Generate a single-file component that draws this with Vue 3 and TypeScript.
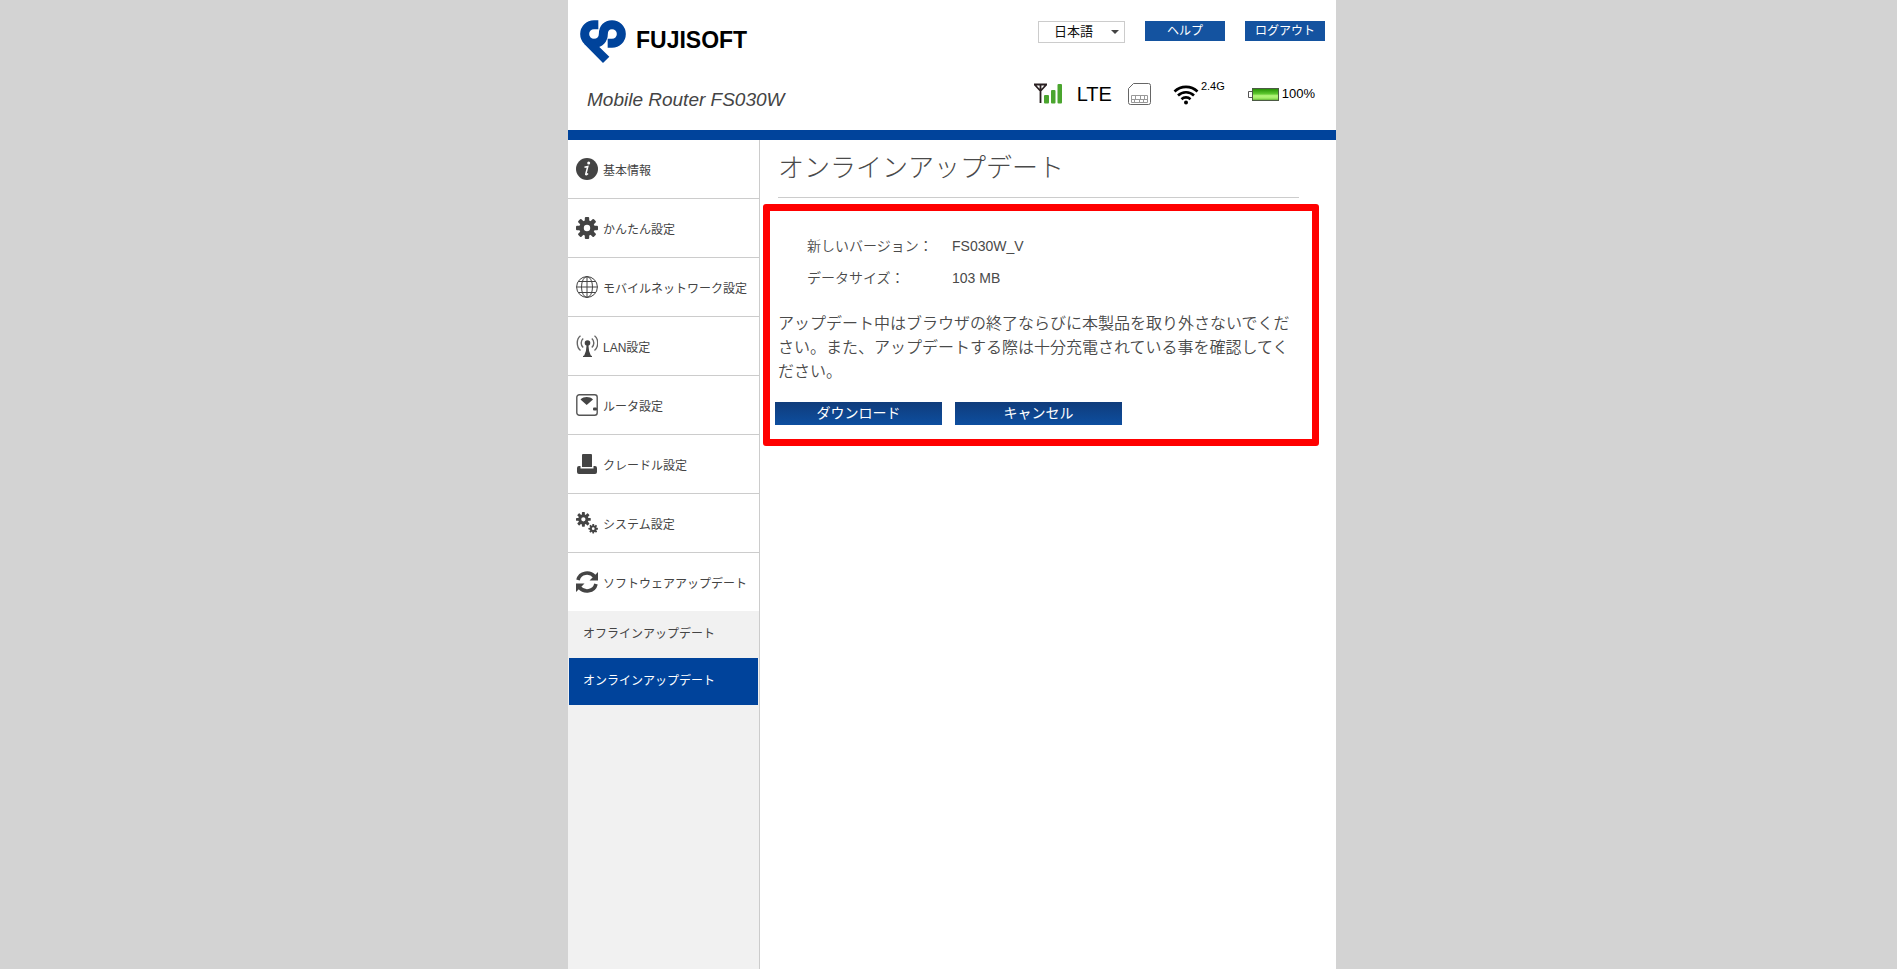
<script setup lang="ts">
import { ref } from 'vue'

interface MenuItem {
  label: string
  icon: string
}

const menu: MenuItem[] = [
  { label: '基本情報', icon: 'info' },
  { label: 'かんたん設定', icon: 'gear' },
  { label: 'モバイルネットワーク設定', icon: 'globe' },
  { label: 'LAN設定', icon: 'antenna' },
  { label: 'ルータ設定', icon: 'router' },
  { label: 'クレードル設定', icon: 'cradle' },
  { label: 'システム設定', icon: 'gears' },
  { label: 'ソフトウェアアップデート', icon: 'refresh' },
]

const submenu = ['オフラインアップデート', 'オンラインアップデート']
const current = ref('オンラインアップデート')
const language = ref('ja')

const teeth = [0, 45, 90, 135, 180, 225, 270, 315]
</script>

<template>
  <div class="page">
    <div class="shell">
      <header class="header">
        <div class="brand">
          <a class="logo" href="#">
            <svg class="logo-mark" viewBox="0 0 138 129" aria-hidden="true">
              <path
                d="M55 14H42a28 28 0 0 0 0 56C60 69 70 58 70 42C70 24 80 14 96 14a28 28 0 0 1 0 56H83"
                fill="none"
                stroke="#00439b"
                stroke-width="27"
              />
              <path d="M12 71L69 129L88 110L58 81L40 60z" fill="#00439b" />
            </svg>
            <span class="logo-text">FUJISOFT</span>
          </a>
          <p class="model">Mobile Router FS030W</p>
        </div>
        <div class="tools">
          <div class="controls">
            <div class="lang">
              <select v-model="language" aria-label="言語">
                <option value="ja">日本語</option>
                <option value="en">English</option>
              </select>
            </div>
            <button type="button" class="small-btn">ヘルプ</button>
            <button type="button" class="small-btn">ログアウト</button>
          </div>
          <div class="status">
            <svg class="signal" viewBox="0 0 30 22" aria-hidden="true">
              <path d="M1 1.500h13M7.500 1v19M2 2l5.500 6L13 2" fill="none" stroke="#2a2022" stroke-width="1.800" />
              <rect x="11" y="12" width="5" height="8.500" rx="1" fill="#4aa52e" />
              <rect x="18" y="7" width="4.500" height="13.500" rx="1" fill="#4aa52e" />
              <rect x="24.500" y="1" width="4.500" height="19.500" rx="1" fill="#4aa52e" />
            </svg>
            <span class="lte">LTE</span>
            <svg class="sim" viewBox="0 0 24 24" aria-hidden="true">
              <path d="M5.500 1.500H20.500a2 2 0 0 1 2 2v17a2 2 0 0 1-2 2H2.500a2 2 0 0 1-2-2V6.500z" fill="#fff" stroke="#666" />
              <path d="M3.500 13.500h16v7h-16zM3.500 17.500h16M7.500 13.500v4M12.500 13.500v4M16.500 13.500v4M6.500 17.500v3M11.500 17.500v3M15.500 17.500v3" fill="none" stroke="#999" />
            </svg>
            <span class="wifi">
              <svg viewBox="0 0 26 21" aria-hidden="true">
                <path d="M1.500 7.500a16.500 16.500 0 0 1 23 0M5 11.500a11.500 11.500 0 0 1 16 0M8.500 15.200a6.500 6.500 0 0 1 9 0" fill="none" stroke="#000" stroke-width="2.600" />
                <circle cx="13" cy="18.500" r="2" fill="#000" />
              </svg>
              <sup>2.4G</sup>
            </span>
            <span class="battery">
              <svg viewBox="0 0 31 14" aria-hidden="true">
                <defs>
                  <linearGradient id="charge" x1="0" y1="0" x2="0" y2="1">
                    <stop offset="0" stop-color="#1f8a00" />
                    <stop offset="0.450" stop-color="#5fc930" />
                    <stop offset="0.600" stop-color="#b4f57c" />
                    <stop offset="0.800" stop-color="#a2ee68" />
                    <stop offset="1" stop-color="#53a82c" />
                  </linearGradient>
                </defs>
                <path d="M4.500 4.500h-4v6h4" fill="#fff" stroke="#555" />
                <rect x="4.500" y="1.500" width="26" height="12" fill="url(#charge)" stroke="#4b5a44" />
              </svg>
              100%
            </span>
          </div>
        </div>
      </header>

      <div class="body">
        <nav class="sidebar">
          <ul>
            <li v-for="item in menu" :key="item.icon" class="menu-item">
              <a href="#">
                <svg viewBox="0 0 22 22" aria-hidden="true">
                  <g v-if="item.icon === 'info'">
                    <circle cx="11" cy="11" r="11" fill="#444" />
                    <circle cx="12.700" cy="5" r="1.500" fill="#fff" />
                    <path d="M8.500 9.200l3.300-.7-2 7.500c-.3 1.200.8 1 2.200-.5" fill="none" stroke="#fff" stroke-width="1.500" />
                  </g>
                  <g v-else-if="item.icon === 'gear'" fill="#444">
                    <rect v-for="t in teeth" :key="t" x="8.800" y="0" width="4.400" height="6" rx="1" :transform="`rotate(${t} 11 11)`" />
                    <circle cx="11" cy="11" r="5.500" fill="none" stroke="#444" stroke-width="4.600" />
                  </g>
                  <g v-else-if="item.icon === 'globe'" fill="none" stroke="#444">
                    <circle cx="11" cy="11" r="10.400" />
                    <ellipse cx="11" cy="11" rx="5.500" ry="10.400" />
                    <path d="M11 .6v20.800M.6 11h20.800M2.500 5.500h17M2.500 16.500h17" />
                  </g>
                  <g v-else-if="item.icon === 'antenna'">
                    <circle cx="11.500" cy="8" r="2.800" fill="#444" />
                    <path d="M10.700 9h1.600l.8 7 1.700 4.500 1.200.5v1H7v-1l1.200-.5L9.900 16z" fill="#444" />
                    <path d="M7.200 3.500a6 6 0 0 0 0 9M15.800 3.500a6 6 0 0 1 0 9M4.500.8C.2 4 .2 12 4.500 15.500M18.500.8C22.800 4 22.800 12 18.500 15.500" fill="none" stroke="#666" stroke-width="1.400" />
                  </g>
                  <g v-else-if="item.icon === 'router'">
                    <rect x=".8" y=".8" width="20.400" height="20.400" rx="2.500" fill="none" stroke="#555" stroke-width="1.400" />
                    <path d="M4.500 5.500C8 2.300 13.500 2.300 17 5.500L10.700 11z" fill="#444" />
                    <rect x="17" y="13.500" width="4" height="3" rx="1" fill="#444" />
                  </g>
                  <g v-else-if="item.icon === 'cradle'" fill="#444">
                    <path d="M6 2a1 1 0 0 1 1-1h8a1 1 0 0 1 1 1v12H6z" />
                    <path d="M1 15a2 2 0 0 1 2-2h1.500v2.500h13V13H19a2 2 0 0 1 2 2v4a2 2 0 0 1-2 2H3a2 2 0 0 1-2-2z" />
                  </g>
                  <g v-else-if="item.icon === 'gears'">
                    <g transform="scale(.67)" fill="#444">
                      <rect v-for="t in teeth" :key="t" x="8.800" y="0" width="4.400" height="6" rx="1" :transform="`rotate(${t} 11 11)`" />
                      <circle cx="11" cy="11" r="5.500" fill="none" stroke="#444" stroke-width="4.600" />
                    </g>
                    <g transform="translate(12.500 12) scale(.43)" fill="#444">
                      <rect v-for="t in teeth" :key="t" x="8.800" y="0" width="4.400" height="6" rx="1" :transform="`rotate(${t} 11 11)`" />
                      <circle cx="11" cy="11" r="5.500" fill="none" stroke="#444" stroke-width="4.600" />
                    </g>
                  </g>
                  <g v-else>
                    <path d="M2 9C4 .8 14 .2 18.500 5.500M20 13C18 21.200 8 21.800 3.500 16.500" fill="none" stroke="#444" stroke-width="3.600" />
                    <path d="M22 1v8.500h-8.500zM0 21v-8.500h8.500z" fill="#444" />
                  </g>
                </svg>
                <span>{{ item.label }}</span>
              </a>
            </li>
          </ul>
          <ul class="submenu">
            <li v-for="name in submenu" :key="name">
              <a href="#" :class="{ active: name === current }" @click.prevent="current = name">{{ name }}</a>
            </li>
          </ul>
        </nav>

        <main class="content">
          <h1>オンラインアップデート</h1>
          <section class="panel">
            <dl>
              <dt>新しいバージョン：</dt>
              <dd>FS030W_V</dd>
              <dt>データサイズ：</dt>
              <dd>103 MB</dd>
            </dl>
            <p>アップデート中はブラウザの終了ならびに本製品を取り外さないでください。また、アップデートする際は十分充電されている事を確認してください。</p>
            <div class="actions">
              <button type="button">ダウンロード</button>
              <button type="button">キャンセル</button>
            </div>
          </section>
        </main>
      </div>
    </div>
  </div>
</template>

<style>
body {
  margin: 0;
  background: #d3d3d3;
}
</style>

<style scoped>
* {
  box-sizing: border-box;
}
.page {
  display: flex;
  justify-content: center;
  min-height: 100vh;
  padding-left: 7px;
  background: #d3d3d3;
  color: #4a4a4a;
  font-family: 'Liberation Sans', 'Noto Sans CJK JP', sans-serif;
  font-weight: 350;
}
.shell {
  display: flex;
  flex-direction: column;
  width: 100%;
  max-width: 768px;
  background: #fff;
}
.header {
  display: flex;
  justify-content: space-between;
  height: 140px;
  border-bottom: 10px solid #00439b;
}
.brand {
  padding: 20px 0 0 12px;
}
.logo {
  display: flex;
  gap: 10px;
  text-decoration: none;
}
.logo-mark {
  width: 46px;
  height: 43px;
}
.logo-text {
  padding-top: 8px;
  color: #000;
  font-size: 23px;
  line-height: 24px;
  font-weight: 700;
}
.model {
  margin: 25px 0 0 7px;
  font-size: 19px;
  line-height: 24px;
  font-style: italic;
  font-weight: 400;
  color: #444;
}
.tools {
  padding: 21px 11px 0 0;
}
.controls {
  display: flex;
  gap: 20px;
  align-items: flex-start;
  justify-content: flex-end;
}
.lang {
  position: relative;
}
.lang::after {
  content: '';
  position: absolute;
  top: 9px;
  right: 6px;
  border: 4px solid transparent;
  border-top-color: #444;
  border-bottom: 0;
  pointer-events: none;
}
.lang select {
  display: block;
  width: 87px;
  height: 22px;
  padding: 0 0 0 15px;
  border: 1px solid #ccc;
  border-radius: 0;
  background: #fff;
  color: #111;
  font: inherit;
  font-size: 13px;
  line-height: 20px;
  font-weight: 400;
  appearance: none;
}
.small-btn {
  width: 80px;
  height: 20px;
  padding: 0;
  border: 0;
  background: #1453a0;
  color: #fff;
  font: inherit;
  font-size: 12px;
  line-height: 20px;
  font-weight: 400;
}
.status {
  display: flex;
  align-items: center;
  justify-content: flex-end;
  height: 24px;
  margin-top: 39px;
  padding-right: 10px;
  color: #000;
  font-weight: 400;
}
.signal {
  width: 30px;
  height: 22px;
}
.lte {
  margin: 0 16px 0 14px;
  font-size: 20px;
  line-height: 24px;
}
.sim {
  width: 24px;
  height: 24px;
}
.wifi {
  display: flex;
  align-items: flex-start;
  gap: 2px;
  margin-left: 21px;
}
.wifi svg {
  width: 26px;
  height: 21px;
}
.wifi sup {
  font-size: 11px;
  line-height: 4px;
}
.battery {
  display: flex;
  align-items: center;
  gap: 3px;
  margin-left: 23px;
  font-size: 13px;
  line-height: 24px;
}
.battery svg {
  width: 31px;
  height: 14px;
}
.body {
  display: flex;
  flex: 1;
}
.sidebar {
  width: 192px;
  flex: none;
  border-right: 1px solid #ccc;
  background: #f1f1f1;
  font-size: 12px;
  font-weight: 400;
}
ul {
  margin: 0;
  padding: 0;
  list-style: none;
}
.menu-item {
  background: #fff;
  border-bottom: 1px solid #ccc;
}
.menu-item:last-child {
  border-bottom: 0;
}
.menu-item a {
  display: flex;
  align-items: center;
  gap: 5px;
  height: 58px;
  padding-left: 8px;
  color: #444;
  text-decoration: none;
  white-space: nowrap;
}
.menu-item svg {
  width: 22px;
  height: 22px;
}
.submenu a {
  display: block;
  margin: 0 1px;
  padding-left: 14px;
  color: #444;
  line-height: 47px;
  text-decoration: none;
}
.submenu a.active {
  background: #00439b;
  color: #fff;
}
.content {
  flex: 1;
  min-width: 0;
  padding: 10px 17px 0 3px;
}
h1 {
  margin: 0 20px 6px 15px;
  padding-bottom: 11px;
  border-bottom: 1px solid #ccc;
  font-size: 26px;
  line-height: 36px;
  font-weight: 300;
}
.panel {
  padding: 19px 5px 14px;
  border: 7px solid #f00;
  border-radius: 3px;
}
dl {
  display: grid;
  grid-template-columns: 145px 1fr;
  margin: 0 0 18px 32px;
  font-size: 14px;
  line-height: 32px;
}
dd {
  margin: 0;
}
.panel p {
  margin: 0 18px 18px 3px;
  margin-right: 5px;
  font-size: 16px;
  line-height: 24px;
}
.actions {
  display: flex;
  gap: 13px;
}
.actions button {
  width: 167px;
  height: 23px;
  padding: 0;
  border: 0;
  background: linear-gradient(#103c7b, #0d4e9f);
  color: #fff;
  font: inherit;
  font-size: 14px;
  line-height: 23px;
  font-weight: 400;
}
</style>
